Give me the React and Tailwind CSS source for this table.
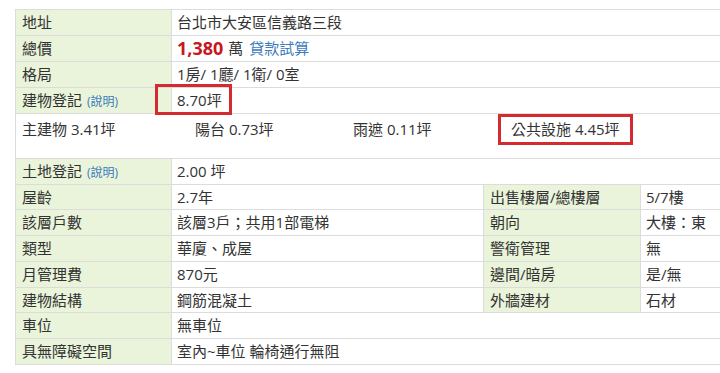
import React from "react";

const FONT = { fontFamily: '"Open Sans", "Noto Sans CJK TC", sans-serif' };

function Label({ children, w = "w-[156px]" }) {
  return (
    <div className={`${w} shrink-0 h-full bg-[#e9f4da] border-r border-[#dcdcdc] pl-[6px] flex items-center text-[15px] text-[#333]`}>
      {children}
    </div>
  );
}

function Val({ children, className = "" }) {
  return (
    <div className={`h-full pl-[5px] flex items-center text-[15px] text-[#333] ${className}`}>
      {children}
    </div>
  );
}

function Row({ h, children }) {
  return <div className={`flex border-b border-[#dcdcdc] ${h}`}>{children}</div>;
}

function Note() {
  return <span className="ml-[5px] mt-[3px] text-[12px] text-[#3d7bbd]">(說明)</span>;
}

function Split({ h, label, value, rlabel, rvalue }) {
  return (
    <Row h={h}>
      <Label>{label}</Label>
      <Val className="w-[312px] shrink-0 border-r border-[#dcdcdc]">{value}</Val>
      <Label w="w-[157px]">{rlabel}</Label>
      <Val className="flex-1">{rvalue}</Val>
    </Row>
  );
}

export default function App() {
  return (
    <div className="w-[720px] h-[373px] overflow-hidden bg-white pt-[9px] pl-[15px]" style={FONT}>
      <div className="w-[760px] border-l border-t border-[#dcdcdc]">
        <Row h="h-[26px]">
          <Label>地址</Label>
          <Val>台北市大安區信義路三段</Val>
        </Row>
        <Row h="h-[26px]">
          <Label>總價</Label>
          <Val>
            <span className="text-[18px] font-bold text-[#c8171e]">1,380</span>
            <span className="ml-[5px]">萬</span>
            <span className="ml-[6px] text-[#3d7bbd]">貸款試算</span>
          </Val>
        </Row>
        <Row h="h-[26px]">
          <Label>格局</Label>
          <Val>1房/ 1廳/ 1衛/ 0室</Val>
        </Row>
        <Row h="h-[26px]">
          <Label>
            建物登記<Note />
          </Label>
          <Val className="relative">
            8.70坪
            <div className="absolute left-[-17px] top-[-4px] w-[77px] h-[31px] border-[3px] border-[#d52a30]" />
          </Val>
        </Row>
        <div className="flex items-start h-[45px] border-b border-[#dcdcdc] text-[15px] text-[#333]">
          <div className="w-[179px] shrink-0 pl-[6px] leading-[31px]">主建物 3.41坪</div>
          <div className="w-[158px] shrink-0 leading-[31px]">陽台 0.73坪</div>
          <div className="w-[145px] shrink-0 leading-[31px]">雨遮 0.11坪</div>
          <div className="h-[31px] border-[3px] border-[#d52a30] px-[10px] leading-[25px]">公共設施 4.45坪</div>
        </div>
        <Row h="h-[26px]">
          <Label>
            土地登記<Note />
          </Label>
          <Val>2.00 坪</Val>
        </Row>
        <Split h="h-[25px]" label="屋齡" value="2.7年" rlabel="出售樓層/總樓層" rvalue="5/7樓" />
        <Split h="h-[26px]" label="該層戶數" value="該層3戶；共用1部電梯" rlabel="朝向" rvalue="大樓：東" />
        <Split h="h-[26px]" label="類型" value="華廈、成屋" rlabel="警衛管理" rvalue="無" />
        <Split h="h-[26px]" label="月管理費" value="870元" rlabel="邊間/暗房" rvalue="是/無" />
        <Split h="h-[25px]" label="建物結構" value="鋼筋混凝土" rlabel="外牆建材" rvalue="石材" />
        <Row h="h-[26px]">
          <Label>車位</Label>
          <Val>無車位</Val>
        </Row>
        <Row h="h-[26px]">
          <Label>具無障礙空間</Label>
          <Val>室內~車位 輪椅通行無阻</Val>
        </Row>
      </div>
    </div>
  );
}
